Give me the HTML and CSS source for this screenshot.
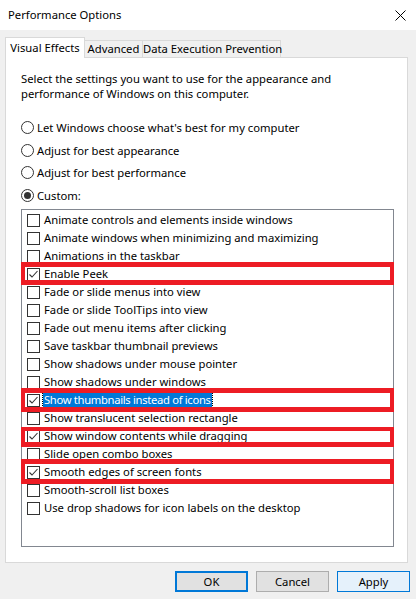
FILE: index.html
```html
<!DOCTYPE html>
<html>
<head>
<meta charset="utf-8">
<link rel="stylesheet" href="styles.css">
</head>
<body>
<div class="window">
  <div class="titlebar">
    <span class="title">Performance Options</span>
    <svg class="close" width="11" height="11" viewBox="0 0 11 11"><path d="M0.5 0.5 L10.5 10.5 M10.5 0.5 L0.5 10.5" stroke="#000" stroke-width="1" fill="none"/></svg>
  </div>
  <div class="body">
    <div class="tabs">
      <div class="tab tab-active tab-ve">Visual Effects</div>
      <div class="tab tab-adv">Advanced</div>
      <div class="tab tab-dep">Data Execution Prevention</div>
    </div>
    <div class="panel">
      <div class="intro">
        <div class="intro-line">Select the settings you want to use for the appearance and</div>
        <div class="intro-line">performance of Windows on this computer.</div>
      </div>
      <div class="radios">
        <div class="radio"><span class="rb"></span><span>Let Windows choose what's best for my computer</span></div>
        <div class="radio"><span class="rb"></span><span>Adjust for best appearance</span></div>
        <div class="radio"><span class="rb"></span><span>Adjust for best performance</span></div>
        <div class="radio"><span class="rb rb-on"></span><span>Custom:</span></div>
      </div>
      <div class="listbox">
        <div class="item"><span class="cb"></span><span class="lbl">Animate controls and elements inside windows</span></div>
        <div class="item"><span class="cb"></span><span class="lbl">Animate windows when minimizing and maximizing</span></div>
        <div class="item"><span class="cb"></span><span class="lbl">Animations in the taskbar</span></div>
        <div class="item mark mark-1"><span class="cb cb-on"><svg width="13" height="13" viewBox="0 0 13 13"><path d="M2.5 6.5 L5 9 L10.5 3" stroke="#333" stroke-width="1.1" fill="none"/></svg></span><span class="lbl">Enable Peek</span></div>
        <div class="item"><span class="cb"></span><span class="lbl">Fade or slide menus into view</span></div>
        <div class="item"><span class="cb"></span><span class="lbl">Fade or slide ToolTips into view</span></div>
        <div class="item"><span class="cb"></span><span class="lbl">Fade out menu items after clicking</span></div>
        <div class="item"><span class="cb"></span><span class="lbl">Save taskbar thumbnail previews</span></div>
        <div class="item"><span class="cb"></span><span class="lbl">Show shadows under mouse pointer</span></div>
        <div class="item"><span class="cb"></span><span class="lbl">Show shadows under windows</span></div>
        <div class="item mark mark-2"><span class="cb cb-on"><svg width="13" height="13" viewBox="0 0 13 13"><path d="M2.5 6.5 L5 9 L10.5 3" stroke="#333" stroke-width="1.1" fill="none"/></svg></span><span class="lbl lbl-sel">Show thumbnails instead of icons</span></div>
        <div class="item"><span class="cb"></span><span class="lbl">Show translucent selection rectangle</span></div>
        <div class="item mark mark-3"><span class="cb cb-on"><svg width="13" height="13" viewBox="0 0 13 13"><path d="M2.5 6.5 L5 9 L10.5 3" stroke="#333" stroke-width="1.1" fill="none"/></svg></span><span class="lbl">Show window contents while dragging</span></div>
        <div class="item"><span class="cb"></span><span class="lbl">Slide open combo boxes</span></div>
        <div class="item mark mark-4"><span class="cb cb-on"><svg width="13" height="13" viewBox="0 0 13 13"><path d="M2.5 6.5 L5 9 L10.5 3" stroke="#333" stroke-width="1.1" fill="none"/></svg></span><span class="lbl">Smooth edges of screen fonts</span></div>
        <div class="item"><span class="cb"></span><span class="lbl">Smooth-scroll list boxes</span></div>
        <div class="item"><span class="cb"></span><span class="lbl">Use drop shadows for icon labels on the desktop</span></div>
      </div>
    </div>
    <div class="buttons">
      <div class="btn btn-default">OK</div>
      <div class="btn">Cancel</div>
      <div class="btn btn-apply">Apply</div>
    </div>
  </div>
</div>
</body>
</html>
```

FILE: styles.css
```css
* { box-sizing: border-box; }
html, body {
  margin: 0;
  padding: 0;
}
body {
  width: 416px;
  height: 599px;
  overflow: hidden;
  background: #f0f0f0;
  font-family: "Noto Sans", "DejaVu Sans", sans-serif;
  font-size: 11.25px;
  color: #000;
}
.window {
  width: 416px;
  height: 599px;
  background: #f0f0f0;
}
.titlebar {
  height: 30px;
  background: #fff;
  display: flex;
  align-items: center;
  justify-content: space-between;
  padding: 0 10px 0 8px;
}
.title {
  line-height: 16px;
  padding-bottom: 1px;
}
.close {
  display: block;
}
.body {
  padding: 7px 0 0 5px;
}
.tabs {
  display: flex;
  align-items: flex-end;
  height: 21px;
  margin-bottom: -1px;
}
.tab {
  height: 17px;
  margin-bottom: 1px;
  margin-left: -1px;
  border: 1px solid #d9d9d9;
  border-bottom: none;
  background: #f0f0f0;
  text-align: center;
  line-height: 15px;
  white-space: nowrap;
}
.tab-active {
  height: 21px;
  margin-bottom: 0;
  margin-left: 0;
  background: #fff;
  position: relative;
  z-index: 1;
  line-height: 17px;
  padding-top: 1px;
}
.tab-ve { width: 80px; }
.tab-adv { width: 59px; }
.tab-dep { width: 139px; }
.panel {
  width: 403px;
  height: 506px;
  background: #fff;
  border: 1px solid #d9d9d9;
  padding: 13px 0 0 15px;
}
.intro-line {
  height: 15px;
  line-height: 15px;
  white-space: nowrap;
}
.radios {
  margin-top: 15px;
}
.radio {
  height: 22.75px;
  display: flex;
  align-items: center;
  white-space: nowrap;
}
.rb {
  width: 13px;
  height: 13px;
  border: 1px solid #333;
  border-radius: 50%;
  margin-right: 3px;
  flex: none;
  display: flex;
  align-items: center;
  justify-content: center;
}
.rb-on::after {
  content: "";
  width: 7px;
  height: 7px;
  border-radius: 50%;
  background: #333;
}
.listbox {
  margin-top: 2px;
  width: 373px;
  height: 338px;
  border: 1px solid #828790;
  padding: 1px 0 0 0;
}
.item {
  height: 18px;
  display: flex;
  align-items: center;
  padding-left: 5px;
  white-space: nowrap;
  position: relative;
}
.cb {
  width: 13px;
  height: 13px;
  border: 1px solid #333;
  flex: none;
  margin-right: 4px;
  position: relative;
}
.cb svg {
  position: absolute;
  left: -1px;
  top: -1px;
}
.lbl {
  line-height: 14px;
}
.lbl-sel {
  background: #0078d7;
  color: #fff;
  outline: 1px dotted #000;
  padding: 0 1px;
  margin-left: -1px;
  letter-spacing: -0.33px;
}
.mark::after {
  content: "";
  position: absolute;
  left: -1px;
  right: -1px;
  top: -3px;
  bottom: -3px;
  border: 5px solid #ed1c24;
  border-left-width: 4px;
  border-right-width: 4px;
  pointer-events: none;
}
.mark-1::after { top: -3px; bottom: -2px; }
.mark-2::after { top: -3px; bottom: -3px; }
.mark-3::after { top: 0px; bottom: -2px; border-top-width: 4px; }
.mark-4::after { top: -4px; bottom: -3px; }
.buttons {
  display: flex;
  justify-content: flex-end;
  gap: 8px;
  margin-top: 8px;
  padding-right: 6px;
}
.btn {
  width: 73px;
  height: 21px;
  border: 1px solid #adadad;
  background: #e1e1e1;
  display: flex;
  align-items: center;
  justify-content: center;
}
.btn-default {
  border: 2px solid #0078d7;
}
.btn-apply {
  border-color: #0078d7;
  background: #e5f1fb;
}
```
